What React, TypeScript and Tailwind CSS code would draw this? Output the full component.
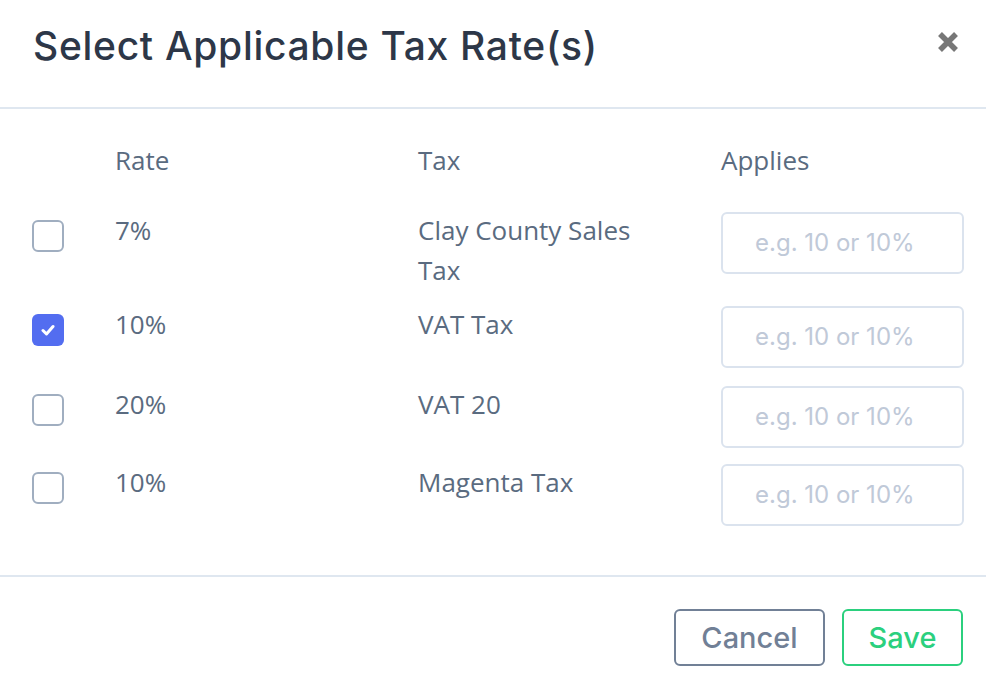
import React from "react";

const rows = [
  { rate: "7%", tax: "Clay County Sales Tax", checked: false, mt: "mt-0" },
  { rate: "10%", tax: "VAT Tax", checked: true, mt: "mt-[16px]" },
  { rate: "20%", tax: "VAT 20", checked: false, mt: "mt-[18px]" },
  { rate: "10%", tax: "Magenta Tax", checked: false, mt: "mt-[16px]" },
];

function Checkbox({ checked }: { checked: boolean }) {
  if (checked) {
    return (
      <div className="mt-2 flex h-8 w-8 items-center justify-center rounded-[6px] bg-[#536df0]">
        <svg width="14" height="12" viewBox="0 0 14 12" fill="none">
          <path d="M2 6.5 L5.5 10 L12 2.5" stroke="white" strokeWidth="3" strokeLinecap="round" strokeLinejoin="round" />
        </svg>
      </div>
    );
  }
  return <div className="mt-2 h-8 w-8 rounded-[6px] border-2 border-[#a0aec0] bg-white" />;
}

export default function App() {
  const body = { fontFamily: '"Open Sans", sans-serif' };
  const head = { fontFamily: 'Inter, "Noto Sans", sans-serif' };
  return (
    <div className="h-[684px] w-[986px] bg-white">
      <div className="flex h-[109px] items-start justify-between border-b-2 border-[#dfe7f0] pl-[33px] pr-[26px] pt-[22px]">
        <h1 className="text-[39px] leading-[48px] font-medium tracking-[0.7px] text-[#2d3748]" style={head}>
          Select Applicable Tax Rate(s)
        </h1>
        <svg className="mt-[8px]" width="24" height="24" viewBox="0 0 24 24">
          <path d="M4 4 L20 20 M20 4 L4 20" stroke="#777777" strokeWidth="5.5" strokeLinecap="butt" />
        </svg>
      </div>

      <div className="h-[468px] border-b-2 border-[#dfe7f0] pl-[32px] pr-[23px] pt-[31px] text-[26px] leading-[40px] text-[#5a6b80]" style={body}>
        <div className="grid grid-cols-[83px_303px_303px_243px]">
          <div />
          <div>Rate</div>
          <div>Tax</div>
          <div>Applies</div>
        </div>
        <div className="mt-[32px] flex flex-col">
          {rows.map((r, i) => (
            <div key={i} className={`grid grid-cols-[83px_303px_303px_243px] items-start ${r.mt}`}>
              <Checkbox checked={r.checked} />
              <div className="-mt-[2px]">{r.rate}</div>
              <div className="-mt-[2px] w-[250px]">{r.tax}</div>
              <div className="flex h-[62px] items-center rounded-[6px] border-2 border-[#dbe3ee] pl-[32px] text-[24px] text-[#c0c9d8]" style={head}>
                e.g. 10 or 10%
              </div>
            </div>
          ))}
        </div>
      </div>

      <div className="flex justify-end gap-[17px] pr-[23px] pt-[32px]" style={head}>
        <button className="h-[57px] w-[151px] rounded-[6px] border-2 border-[#718096] text-[29px] font-medium text-[#718096]">
          Cancel
        </button>
        <button className="h-[57px] w-[121px] rounded-[6px] border-2 border-[#2bd07e] text-[29px] font-medium text-[#2bd07e]">
          Save
        </button>
      </div>
    </div>
  );
}
